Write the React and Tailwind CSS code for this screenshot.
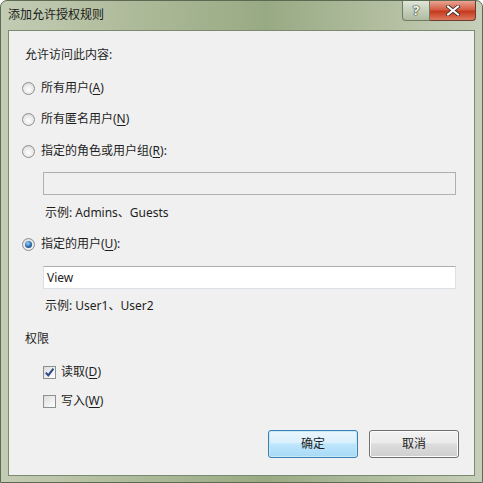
import React from 'react'

const font = { fontFamily: '"Noto Sans", "Noto Sans CJK SC", sans-serif' }

function U({ children }) {
  return <span className="underline underline-offset-2">{children}</span>
}

function Radio({ checked }) {
  return (
    <span className="w-[13px] h-[13px] rounded-full border border-[#8e8f8f] bg-[radial-gradient(circle_at_50%_60%,#ffffff_0%,#e6e6e6_60%,#c8c8c8_100%)] flex items-center justify-center shrink-0">
      {checked && (
        <span className="w-[7px] h-[7px] rounded-full bg-[radial-gradient(circle_at_40%_35%,#9fd0f4_0%,#2a6ab0_55%,#0d2c5c_100%)]" />
      )}
    </span>
  )
}

function Check({ checked }) {
  return (
    <span className="w-[13px] h-[13px] border border-[#8e8f8f] bg-[linear-gradient(135deg,#dcdcdc,#ffffff)] flex items-center justify-center shrink-0">
      {checked && (
        <svg width="11" height="11" viewBox="0 0 11 11">
          <path d="M1.8 5.6 L4.3 8.4 L9.4 1.6" fill="none" stroke="#2b4a8a" strokeWidth="2" />
        </svg>
      )}
    </span>
  )
}

function Row({ children, className = '' }) {
  return <div className={`h-4 flex items-center leading-4 ${className}`}>{children}</div>
}

export default function App() {
  return (
    <div style={font} className="w-[483px] h-[483px] overflow-hidden text-[12px] text-[#1e1e1e]">
      <div className="w-full h-full rounded-t-[7px] border border-[#5d6a52] bg-[linear-gradient(90deg,#c3ccb4_0%,#a8b693_35%,#98aa84_55%,#b2bea0_80%,#c6cfb9_100%)] flex flex-col">
        {/* title bar */}
        <div className="h-[29px] flex items-start shrink-0">
          <div className="pl-[7px] pt-[6px] text-[12px] leading-4 text-[#1a1a1a]">添加允许授权规则</div>
          <div className="ml-auto mr-[6px] flex">
            <div className="w-[28px] h-[20px] rounded-bl-[4px] border border-t-0 border-[#6f7a66] bg-[linear-gradient(180deg,#dfe5d8_0%,#c5cfbb_50%,#aebb9f_100%)] flex items-center justify-center text-[13px] font-bold text-[#f4f6f2] [text-shadow:0_0_1px_#3a4632,0_0_1px_#3a4632,0_0_2px_#3a4632]">?</div>
            <div className="w-[46px] h-[20px] rounded-br-[4px] border border-t-0 border-l-0 border-[#6b3a30] bg-[linear-gradient(180deg,#e9a493_0%,#d55e45_45%,#c53a1e_55%,#de7a5e_100%)] flex items-center justify-center">
              <svg width="14" height="11" viewBox="0 0 14 11">
                <path d="M2 1.5 L12 9.5 M12 1.5 L2 9.5" stroke="#3a2a25" strokeWidth="3.6" strokeLinecap="square" />
                <path d="M2 1.5 L12 9.5 M12 1.5 L2 9.5" stroke="#ffffff" strokeWidth="2" strokeLinecap="square" />
              </svg>
            </div>
          </div>
        </div>

        {/* client area */}
        <div className="mx-[7px] h-[446px] border border-[#7d8a72] bg-[#f0f0f0] pl-[13px] pr-[15px] flex flex-col">
          <Row className="mt-[16px] pl-[3px]">允许访问此内容:</Row>

          <Row className="mt-[17px] gap-[6px]"><Radio /><span>所有用户(<U>A</U>)</span></Row>
          <Row className="mt-[15px] gap-[6px]"><Radio /><span>所有匿名用户(<U>N</U>)</span></Row>
          <Row className="mt-[16px] gap-[6px]"><Radio /><span>指定的角色或用户组(<U>R</U>):</span></Row>

          <div className="mt-[13px] ml-[21px] mr-[3px] h-[23px] border border-[#adb2b5] border-t-[#abadb3] bg-[#f0f0f0]" />
          <Row className="mt-[10px] pl-[23px]">示例: Admins、Guests</Row>

          <Row className="mt-[15px] gap-[6px]"><Radio checked /><span>指定的用户(<U>U</U>):</span></Row>

          <div className="mt-[14px] ml-[21px] mr-[3px] h-[23px] border border-[#dbdfe6] border-t-[#abadb3] bg-white flex items-center pl-[3px]">View</div>
          <Row className="mt-[9px] pl-[23px]">示例: User1、User2</Row>

          <Row className="mt-[17px] pl-[3px]">权限</Row>

          <Row className="mt-[17px] gap-[5px] pl-[21px]"><Check checked /><span>读取(<U>D</U>)</span></Row>
          <Row className="mt-[13px] gap-[5px] pl-[21px]"><Check /><span>写入(<U>W</U>)</span></Row>

          <div className="mt-[21px] flex justify-end gap-[11px]">
            <button className="w-[90px] h-[28px] rounded-[3px] border border-[#3c7fb1] bg-[linear-gradient(180deg,#eaf6fd_0%,#d9f0fc_45%,#bee6fd_50%,#a7d9f5_100%)] shadow-[inset_0_0_0_1px_#c8e8f8] text-[12px]">确定</button>
            <button className="w-[90px] h-[28px] rounded-[3px] border border-[#707070] bg-[linear-gradient(180deg,#f2f2f2_0%,#ebebeb_45%,#dddddd_50%,#cfcfcf_100%)] shadow-[inset_0_0_0_1px_#fcfcfc] text-[12px]">取消</button>
          </div>
        </div>
      </div>
    </div>
  )
}
